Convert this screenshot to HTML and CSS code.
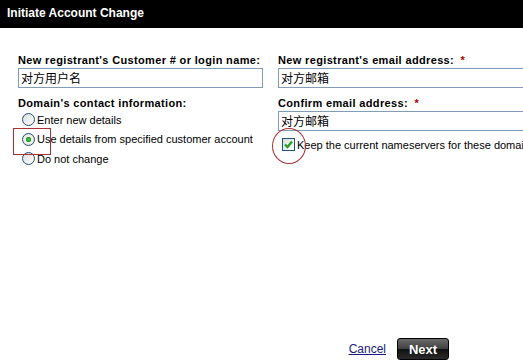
FILE: index.html
```html
<!DOCTYPE html>
<html lang="en">
<head>
  <meta charset="UTF-8" />
  <title>Initiate Account Change</title>
  <link rel="stylesheet" href="styles.css">
</head>
<body>

<div class="dialog">
  <div class="dialog-title">Initiate Account Change</div>

  <div class="form">
    <div class="col">
      <label class="field-label">New registrant's Customer # or login name:</label>
      <div class="text-box">对方用户名</div>

      <div class="field-label section">Domain's contact information:</div>
      <div class="option"><span class="radio"></span>Enter new details</div>
      <div class="option"><span class="radio checked"></span>Use details from specified customer account</div>
      <div class="option"><span class="radio"></span>Do not change</div>
    </div>

    <div class="col">
      <label class="field-label">New registrant's email address: <span class="req">*</span></label>
      <div class="text-box wide">对方邮箱</div>

      <label class="field-label section">Confirm email address: <span class="req">*</span></label>
      <div class="text-box wide">对方邮箱</div>

      <div class="option check-row">
        <span class="checkbox">
          <svg width="11" height="11" viewBox="0 0 11 11"><path d="M2 5.5 L4.5 8 L9 2.5" fill="none" stroke="#21a121" stroke-width="2.2"/></svg>
        </span>Keep the current nameservers for these domains
      </div>
    </div>
  </div>

  <div class="actions">
    <a href="#" class="cancel">Cancel</a>
    <button class="next-btn">Next</button>
  </div>

  <!-- red marks drawn over the screenshot -->
  <div class="mark-box"></div>
  <div class="mark-circle"></div>
</div>

</body>
</html>
```

FILE: styles.css
```css
body {
  margin: 0;
  background: #fff;
  font-family: "Liberation Sans", Arial, sans-serif;
  color: #000;
  overflow: hidden;
}
.dialog {
  position: relative;
  width: 523px;
  height: 362px;
  overflow: hidden;
}
.dialog-title {
  height: 28px;
  line-height: 27px;
  background: #000;
  color: #fff;
  font-weight: bold;
  font-size: 12px;
  padding-left: 7px;
}
.form {
  display: grid;
  grid-template-columns: 245px 300px;
  column-gap: 15px;
  padding: 25px 0 0 18px;
}
.col {
  display: flex;
  flex-direction: column;
}
.field-label {
  font-size: 11px;
  font-weight: bold;
  line-height: 14px;
  letter-spacing: 0.35px;
}
.field-label.section {
  margin-top: 8px;
}
.req {
  color: #b00000;
  margin-left: 3px;
}
.text-box {
  margin-top: 1px;
  height: 18px;
  border: 1px solid #7f9db9;
  font-family: "Noto Sans CJK SC", sans-serif;
  font-size: 12px;
  line-height: 18px;
  padding-left: 2px;
}
.option {
  display: flex;
  align-items: center;
  font-size: 11px;
  height: 19.5px;
  margin-left: 4px;
}
.radio {
  width: 11px;
  height: 11px;
  border: 1px solid #1c5180;
  border-radius: 50%;
  background: linear-gradient(135deg, #dcdcd6, #fff);
  margin-right: 2px;
  box-sizing: content-box;
}
.radio.checked {
  background: radial-gradient(circle, #4fc04f 0, #21a121 2.5px, #f4f4f0 3px, #dcdcd6 100%);
}
.check-row {
  margin-top: 4px;
}
.checkbox {
  display: flex;
  width: 11px;
  height: 11px;
  border: 1px solid #1c5180;
  background: linear-gradient(135deg, #dcdcd6, #fff);
  margin-right: 2px;
  align-items: center;
  justify-content: center;
  box-sizing: content-box;
}
.actions {
  position: absolute;
  right: 74px;
  bottom: 2px;
  display: flex;
  align-items: center;
  gap: 11px;
}
.cancel {
  font-size: 12px;
  color: #1a1a80;
}
.next-btn {
  width: 52px;
  height: 22px;
  border: 1px solid #000;
  border-radius: 3px;
  background: linear-gradient(#6a6a6a, #404040 50%, #111 52%, #2a2a2a);
  color: #fff;
  font-family: inherit;
  font-weight: bold;
  font-size: 13px;
  padding: 0;
}
.mark-box {
  position: absolute;
  left: 13px;
  top: 128px;
  width: 36px;
  height: 25px;
  border: 1px solid #a83232;
}
.mark-circle {
  position: absolute;
  left: 272px;
  top: 128px;
  width: 32px;
  height: 34px;
  border: 1px solid #a83232;
  border-radius: 50%;
}
```
